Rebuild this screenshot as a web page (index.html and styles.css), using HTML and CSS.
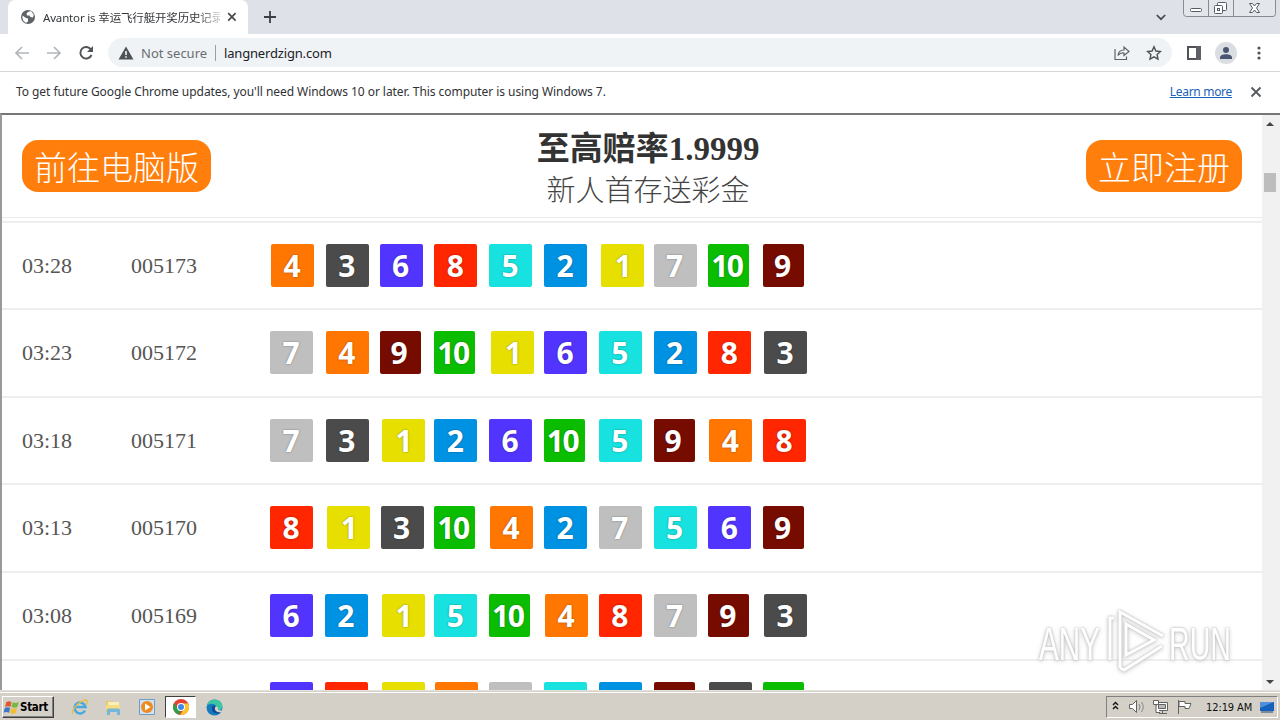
FILE: index.html
```
<!DOCTYPE html>
<html lang="zh-CN">
<head>
<meta charset="utf-8">
<title>Avantor is 幸运飞行艇开奖历史记录</title>
<link rel="stylesheet" href="styles.css">
</head>
<body>
<header class="tabs">
  <div class="tab">
    <svg class="globe" width="16" height="16" viewBox="0 0 16 16"><circle cx="8" cy="8" r="7" fill="#5f6368"/><path d="M2.500 6.500L6 9l2 .5v3l-1.500 1.200C4 13.500 2.200 11 2.500 6.500zM8 3l3-1 2.800 3.500-.8 3-2.500-.5-1-1.500L7 6.500 6.500 4.500z" fill="#fff"/></svg>
    <span class="tab-title">Avantor is 幸运飞行艇开奖历史记录</span>
    <svg class="tab-close" width="10" height="10" viewBox="0 0 10 10"><path d="M1.200 1.200l7.400 7.400M8.600 1.200L1.200 8.600" stroke="#45484c" stroke-width="1.700"/></svg>
  </div>
  <svg class="plus" width="12" height="12" viewBox="0 0 12 12"><path d="M6 0v12M0 6h12" stroke="#3c4043" stroke-width="1.800"/></svg>
  <svg class="chev" width="10" height="7" viewBox="0 0 10 7"><path d="M.8 1L5 5.200 9.200 1" fill="none" stroke="#45484c" stroke-width="1.700"/></svg>
  <svg class="caption" width="94" height="18" viewBox="0 0 94 18"><path d="M.5 0v13.500q0 3 3 3h86.500q2.500 0 2.500-3V0M25.500 0v16.500M50.500 0v16.500" fill="#e3e6eb" stroke="#868b94"/><g fill="#fff" stroke="#555b66"><rect x="7.500" y="8.500" width="11" height="3" rx="1"/><rect x="34.500" y="2.500" width="9" height="8" rx="1"/><rect x="31.500" y="5.500" width="8" height="8" rx="1"/><rect x="34.500" y="8.500" width="2" height="2"/><path d="M66.500 3.500h3l2 2.500 2-2.500h3l-3 4.500 3 4.500h-3l-2-2.500-2 2.500h-3l3-4.500z"/></g></svg>
</header>
<nav class="toolbar">
  <svg class="nav-icons" width="100" height="20" viewBox="0 0 100 20"><g fill="none" stroke-width="1.700"><path d="M29 10H16.500M22 4l-6 6 6 6M47 10h12.500M54 4l6 6-6 6" stroke="#b3b6b9"/><path d="M91 6.500A5.800 5.800 0 1 0 91.500 12" stroke="#505357" stroke-width="2"/></g><path d="M93 3v6h-6z" fill="#505357"/></svg>
  <div class="omnibox">
    <svg width="16" height="14" viewBox="0 0 16 14"><path d="M8 .5L15.500 13.500H.5z" fill="#4f5357"/><path d="M8 5v4M8 10.300v1.500" stroke="#fff" stroke-width="1.500"/></svg>
    <span class="unsafe">Not secure</span><i class="divider"></i><span class="address">langnerdzign.com</span>
    <svg class="share" width="16" height="16" viewBox="0 0 16 16"><path d="M1 4v10.500h11.500v-3M4 10.500Q4.500 5 10 5V2l5 4.500-5 4V8Q6 7.500 4 10.500z" fill="none" stroke="#5f6368" stroke-width="1.200"/></svg>
    <svg class="star" width="16" height="16" viewBox="0 0 16 16"><path d="M8 1.800l1.900 4.200 4.600.5-3.400 3.100.9 4.600L8 11.900 4 14.200l.9-4.600L1.500 6.500 6.100 6z" fill="none" stroke="#4c5054" stroke-width="1.400"/></svg>
  </div>
  <svg class="panel" width="14" height="14" viewBox="0 0 14 14"><path d="M1 1h12v12H1z" fill="none" stroke="#505357" stroke-width="2"/><path d="M9 0h5v14H9z" fill="#5f6065"/></svg>
  <svg class="avatar" width="22" height="22" viewBox="0 0 22 22"><circle cx="11" cy="11" r="11" fill="#dadde2"/><circle cx="11" cy="8" r="3" fill="#4a5572"/><path d="M5 17v-1.500c0-4.500 12-4.500 12 0V17z" fill="#4a5572"/></svg>
  <svg class="dots" width="4" height="14" viewBox="0 0 4 14"><g fill="#505357"><circle cx="2" cy="2" r="1.600"/><circle cx="2" cy="7" r="1.600"/><circle cx="2" cy="12" r="1.600"/></g></svg>
</nav>
<div class="notice">
  <span class="notice-text">To get future Google Chrome updates, you'll need Windows 10 or later. This computer is using Windows 7.</span>
  <a class="learn">Learn more</a>
  <svg width="12" height="12" viewBox="0 0 12 12"><path d="M1.500 1.500l9 9M10.500 1.500l-9 9" stroke="#55585c" stroke-width="1.800"/></svg>
</div>
<main class="viewport">
  <section class="page">
    <div class="banner">
      <a class="pill">前往电脑版</a>
      <div class="promo"><b>至高赔率1.9999</b><span>新人首存送彩金</span></div>
      <a class="pill">立即注册</a>
    </div>
    <div class="results" id="results"></div>
  </section>
  <aside class="scrollbar"><i class="up"></i><i class="thumb"></i><i class="down"></i></aside>
</main>
<footer class="taskbar">
  <div class="start"><svg width="17" height="17" viewBox="0 0 16 16"><path d="M3 3q2.500-2 5 0L7 7.500Q4.500 6 2 7.500z" fill="#df5a2a"/><path d="M9 3q3 1.500 6-.5L13.500 7.500Q11 9 8 7.500z" fill="#79b64a"/><path d="M1.700 8.500q2.500-1.500 5 0l-1 4.500Q3 11.500.5 13z" fill="#3979c8"/><path d="M7.700 8.500q3 1.500 5.500 0L12 13q-2.500 2-5.300 0z" fill="#f3bd30"/></svg><b>Start</b></div>
  <svg class="ie" width="18" height="18" viewBox="0 0 18 18"><path d="M14 12.500A5.500 5.500 0 1 1 14.500 9H5" fill="none" stroke="#48a9df" stroke-width="2.600"/><path d="M2 16C-1 13 9 2 15 2q2.500.5 0 5" fill="none" stroke="#e6bd48" stroke-width="1.400"/></svg>
  <svg class="folder" width="18" height="18" viewBox="0 0 18 18"><path d="M2 3h5l1 2h7v9H2z" fill="#e9ca68"/><path d="M4 4h11v3H4z" fill="#f9efb8"/><path d="M2 7h14v4H2z" fill="#f4dc83"/><path d="M3 17v-5q0-1.500 2-1.500h9q2 0 2 1.500v5h-3v-3H6v3z" fill="#76b6d8"/></svg>
  <svg class="media" width="16" height="16" viewBox="0 0 16 16"><path d="M.5.500h15v15H.5z" fill="#cde3f3" stroke="#709cc5"/><circle cx="8" cy="8" r="6" fill="#ef8a1e"/><path d="M6 4.500l5.500 3.500L6 11.500z" fill="#fff"/></svg>
  <div class="active"><svg width="16" height="16" viewBox="0 0 16 16"><circle cx="8" cy="8" r="8" fill="#e34133"/><path d="M1.100 4L5 10l3 1-2.200 4.700A8 8 0 0 1 1.100 4z" fill="#2c9f4b"/><path d="M8 4.500h7.200A8 8 0 0 1 7 16l4-6z" fill="#fbc52d"/><circle cx="8" cy="8" r="4" fill="#fff"/><circle cx="8" cy="8" r="3" fill="#4285e8"/></svg></div>
  <svg class="edge" width="17" height="17" viewBox="0 0 17 17"><circle cx="8.500" cy="8.500" r="8" fill="#1779be"/><path d="M1 7Q2 .5 9 .5q7 .5 7.500 7-.5 4-5 4-2-.5-1-2Q11 6 7.500 5 3 4 1 7z" fill="#3cc7a0"/><path d="M6 8Q5 14 12 14.500L16 12q-3 1.500-6 0-2-1-1-3 1-2-1-2.500-1.500 0-2 1.500z" fill="#114a91"/><path d="M9 8.500q1-2 3 0v2.500l5 .8-1 1.200q-4 1-6-1-1.500-1.500-1-3.500z" fill="#d4d0c8"/></svg>
  <div class="tray">
    <svg width="80" height="18" viewBox="0 0 80 18"><path d="M1 7L3.500 4.500 6 7M1 11L3.500 8.500 6 11" fill="none" stroke="#111" stroke-width="1.400"/><g fill="#fff" stroke="#62625e"><path d="M17.500 6.500h3l4-4v12l-4-4h-3z"/><path d="M27 6q2 3 0 6M29.500 4q3.500 5 0 10" fill="none" stroke="#888"/><path d="M44.500 4.500h11v8h-11z"/><path d="M46.500 6.500h7v4h-7z" fill="#bbb"/><path d="M47 15.500h8M50.500 12.500v3M41.500 2.500h5v4h-5zM44 6.500v8h4" /><path d="M66.500 2v14M67 3.500h6v2h6l-2 5h-4v-2h-6z"/></g></svg>
    <span>12:19 AM</span>
    <svg width="16" height="14" viewBox="0 0 16 14"><path d="M1 2h14v9H1z" fill="#1660bd"/><path d="M1 2h14L1 8z" fill="#4d91dc"/><path d="M2 12h12" stroke="#23456d"/></svg>
  </div>
</footer>
<svg class="watermark" width="210" height="80" viewBox="0 0 210 80">
  <g class="mark"><text x="7" y="58" textLength="61" lengthAdjust="spacingAndGlyphs">ANY</text><text x="137" y="58" textLength="62" lengthAdjust="spacingAndGlyphs">RUN</text>
  <path d="M78 58V16h4M88 66V10l43 24M94 22v31l28-15zM88 66l4 2 38-24" fill="none"/></g>
</svg>
<script src="app.js"></script>
</body>
</html>
```
FILE: styles.css
```
* { box-sizing: border-box; }
body { margin: 0; width: 1280px; height: 720px; overflow: hidden; display: flex; flex-direction: column; position: relative; background: #fff; font-family: "Noto Sans", "Noto Sans CJK SC", sans-serif; }
svg { display: block; flex: none; }
.tabs { height: 34px; background: #dee1e8; display: flex; align-items: flex-start; flex: none; }
.tab { width: 240px; height: 34px; margin-left: 8px; background: #fff; border-radius: 7px 7px 0 0; display: flex; align-items: center; padding-left: 12px; }
.tab-title { width: 177px; margin-left: 7px; overflow: hidden; white-space: nowrap; font-size: 11.500px; letter-spacing: -.16px; color: #34373a; -webkit-mask-image: linear-gradient(90deg, #000 155px, #0003 177px); mask-image: linear-gradient(90deg, #000 155px, #0003 177px); }
.tab-close { margin-left: 7px; }
.plus { margin: 11px 0 0 16px; }
.chev { margin: 14px 17px 0 auto; }
.caption { margin-right: 3px; }
.toolbar { height: 38px; flex: none; display: flex; align-items: center; border-bottom: 1px solid #d4d6d8; }
.omnibox { width: 1064px; height: 29px; margin-left: 8px; padding-left: 10px; border-radius: 15px; background: #f0f3f6; display: flex; align-items: center; font-size: 13px; white-space: nowrap; }
.unsafe { width: 67px; margin-left: 7px; color: #6a6d71; }
.divider { width: 1px; height: 16px; margin: 0 8px 0 7px; background: #9b9ea2; }
.address { color: #202124; letter-spacing: -.17px; }
.share { margin-left: auto; }
.star { margin: 0 10px 0 16px; }
.panel { margin-left: 15px; }
.avatar { margin-left: 14px; }
.dots { margin-left: 20px; }
.notice { height: 41px; flex: none; display: flex; align-items: center; padding: 0 18px 2px 16px; font-size: 12px; color: #303236; white-space: nowrap; }
.notice-text { letter-spacing: -.055px; }
.learn { margin: 0 18px 0 auto; letter-spacing: -.3px; color: #1763b6; text-decoration: underline; }
.viewport { height: 577px; flex: none; display: flex; border-top: 2px solid #777; border-left: 2px solid #999; overflow: hidden; }
.page { width: 1260px; overflow: hidden; }
.banner { height: 103px; display: flex; justify-content: space-between; align-items: flex-start; padding: 25px 20px 0; border-bottom: 1px solid #ececec; }
.pill { height: 52px; padding: 0 12px; border-radius: 16px; background: #ff7e0c; color: #fff; font: 300 33px/52px "Noto Sans CJK SC", sans-serif; }
.promo { display: flex; flex-direction: column; align-items: center; margin: -11px 1px 0 0; color: #333; }
.promo b { font: 700 33px/40px "Liberation Serif", "Noto Sans CJK SC", serif; height: 40px; }
.promo span { font: 300 29px/38px "Noto Sans CJK SC", sans-serif; color: #444; }
.results { margin-top: 3px; border-top: 2px solid #eee; }
.row { height: 87.700px; border-bottom: 2px solid #eee; display: flex; align-items: center; padding-left: 20px; font: 22px "Liberation Serif", serif; color: #555; }
.row:first-child { height: 87px; }
.time { width: 109px; }
.issue { width: 139px; }
.cell { width: 54.800px; padding-bottom: 1px; }
.ball { width: 43px; height: 43px; border-radius: 2px; padding-right: 1px; display: flex; justify-content: center; color: #fff; font: 700 30px/43px "Noto Sans", sans-serif; text-shadow: 0 0 2px #0006; }
.n1 { background: #e6df00; margin-left: 2px; padding-left: 3px; }
.n2 { background: #0092e2; }
.n3 { background: #4b4b4b; margin-left: 1px; }
.n4 { background: #ff7600; margin-left: 1px; }
.n5 { background: #18e2e0; }
.n6 { background: #5234ff; }
.n7 { background: #bfbfbf; }
.n8 { background: #ff2600; }
.n9 { background: #760b00; width: 41px; padding-right: 2px; }
.n10 { background: #0abd00; width: 41px; padding-right: 4px; letter-spacing: -1.500px; }
.scrollbar { width: 18px; background: #f1f1f1; display: flex; flex-direction: column; align-items: center; padding: 7px 2px 6px 0; }
.up { border: 4px solid transparent; border-top: 0; border-bottom-color: #444; }
.thumb { width: 12px; height: 19px; margin-top: 47px; background: #bdbdbd; }
.down { margin-top: auto; border: 4px solid transparent; border-bottom: 0; border-top-color: #444; }
.taskbar { height: 30px; flex: none; border-top: 1px solid #e4e2dc; box-shadow: inset 0 1px #d4d0c8, inset 0 2px #fff; background: #d4d0c8; display: flex; align-items: center; padding: 3px 2px 0; }
.start { width: 52px; height: 22px; display: flex; align-items: center; background: #d4d0c8; border: 1px solid; border-color: #fff #404040 #404040 #fff; box-shadow: inset -1px -1px #808080; color: #000; }
.start b { font: 700 11.500px "DejaVu Sans Condensed", sans-serif; letter-spacing: -.3px; }
.ie { margin-left: 17px; }
.folder { margin-left: 15px; }
.media { margin-left: 17px; }
.active { width: 31px; height: 22px; margin-left: 10px; background: #fff; border: 1px solid; border-color: #404040 #fff #fff #404040; display: flex; align-items: center; justify-content: center; }
.edge { margin-left: 10px; }
.tray { width: 172px; height: 22px; margin-left: auto; border: 1px solid; border-color: #808080 #fff #fff #808080; display: flex; align-items: center; padding-left: 5px; font: 11px "DejaVu Sans Condensed", sans-serif; color: #111; white-space: nowrap; }
.tray span { width: 47px; margin: 0 6px 0 14px; letter-spacing: -.1px; }
.watermark { position: absolute; left: 1032px; top: 602px; }
.mark { stroke: #fff; stroke-width: 3; filter: drop-shadow(0 0 1px #aaa) drop-shadow(0 1px 2px #ccc); opacity: .85; }
.mark text { font: 47px "Liberation Sans", sans-serif; fill: #fff; stroke-width: 0; }
```
FILE: app.js
```
const draws = [
  ["03:28", "005173", [4, 3, 6, 8, 5, 2, 1, 7, 10, 9]],
  ["03:23", "005172", [7, 4, 9, 10, 1, 6, 5, 2, 8, 3]],
  ["03:18", "005171", [7, 3, 1, 2, 6, 10, 5, 9, 4, 8]],
  ["03:13", "005170", [8, 1, 3, 10, 4, 2, 7, 5, 6, 9]],
  ["03:08", "005169", [6, 2, 1, 5, 10, 4, 8, 7, 9, 3]],
  ["", "", [6, 8, 1, 4, 7, 5, 2, 9, 3, 10]]
];
document.getElementById("results").innerHTML = draws.map(([time, issue, balls]) =>
  `<div class="row"><span class="time">${time}</span><span class="issue">${issue}</span>${balls.map(n => `<div class="cell"><div class="ball n${n}">${time ? n : ""}</div></div>`).join("")}</div>`
).join("");
```
